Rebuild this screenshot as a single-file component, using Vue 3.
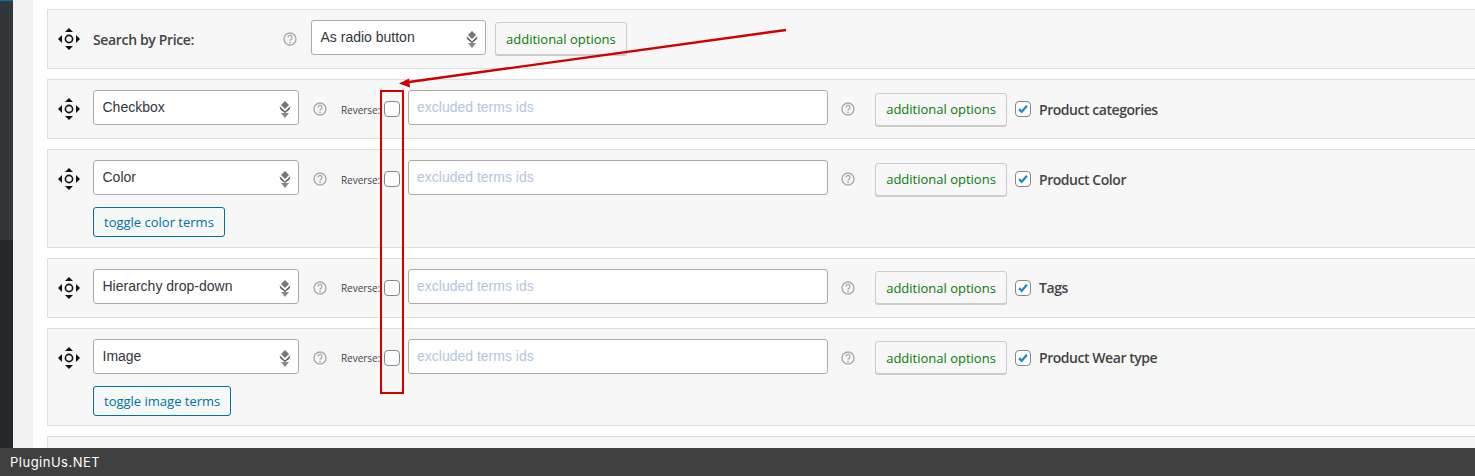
<script setup>
const rows = [
  { type: 'Checkbox', label: 'Product categories' },
  { type: 'Color', label: 'Product Color', toggle: 'toggle color terms' },
  { type: 'Hierarchy drop-down', label: 'Tags' },
  { type: 'Image', label: 'Product Wear type', toggle: 'toggle image terms' },
]
</script>

<template>
  <div class="page">
    <aside class="sidebar"><div class="side-top"></div><div class="side-low"></div></aside>
    <div class="gutter"></div>
    <main class="main">
      <section class="row">
        <div class="line">
          <svg class="move shift" viewBox="0 0 22 22"><path d="M11 0l4 4H7zM11 22l-4-4h8zM0 11l4-4v8zM22 11l-4 4V7z" fill="#111"/><circle cx="11" cy="11" r="3.6" fill="none" stroke="#111" stroke-width="1.6"/></svg>
          <strong class="title shift">Search by Price:</strong>
          <svg class="help help-first shift" viewBox="0 0 14 14"><circle cx="7" cy="7" r="6" fill="none" stroke="#aaa" stroke-width="1.4"/><path d="M5 5.4a2 2 0 1 1 3.1 1.7c-.8.5-1.1.8-1.1 1.6" fill="none" stroke="#aaa" stroke-width="1.3"/><circle cx="7" cy="10.4" r=".9" fill="#aaa"/></svg>
          <div class="select select-price">As radio button
            <svg class="arrows" viewBox="0 0 12 17"><path d="M6 0l4 4-4 4-4-4z" fill="#777"/><path d="M0.5 5l5.5 5.5L11.500 5l-1 3.500-4.500 3.500-4.500-3.500z" fill="#555"/><path d="M2 12h8l-4 5z" fill="#7f8a94"/></svg>
          </div>
          <button class="options options-price">additional options</button>
        </div>
      </section>

      <section v-for="r in rows" :key="r.type" class="row">
        <div class="line">
          <svg class="move shift" viewBox="0 0 22 22"><path d="M11 0l4 4H7zM11 22l-4-4h8zM0 11l4-4v8zM22 11l-4 4V7z" fill="#111"/><circle cx="11" cy="11" r="3.6" fill="none" stroke="#111" stroke-width="1.6"/></svg>
          <div class="select select-term">{{ r.type }}
            <svg class="arrows" viewBox="0 0 12 17"><path d="M6 0l4 4-4 4-4-4z" fill="#777"/><path d="M0.5 5l5.5 5.5L11.500 5l-1 3.500-4.500 3.500-4.500-3.500z" fill="#555"/><path d="M2 12h8l-4 5z" fill="#7f8a94"/></svg>
          </div>
          <svg class="help help-a shift" viewBox="0 0 14 14"><circle cx="7" cy="7" r="6" fill="none" stroke="#aaa" stroke-width="1.4"/><path d="M5 5.4a2 2 0 1 1 3.1 1.7c-.8.5-1.1.8-1.1 1.6" fill="none" stroke="#aaa" stroke-width="1.3"/><circle cx="7" cy="10.4" r=".9" fill="#aaa"/></svg>
          <span class="reverse shift">Reverse:</span>
          <span class="box shift"></span>
          <div class="excluded">excluded terms ids</div>
          <svg class="help help-b shift" viewBox="0 0 14 14"><circle cx="7" cy="7" r="6" fill="none" stroke="#aaa" stroke-width="1.4"/><path d="M5 5.4a2 2 0 1 1 3.1 1.7c-.8.5-1.1.8-1.1 1.6" fill="none" stroke="#aaa" stroke-width="1.3"/><circle cx="7" cy="10.4" r=".9" fill="#aaa"/></svg>
          <button class="options options-term shift">additional options</button>
          <span class="box checked shift"><svg viewBox="0 0 16 16"><path d="M3.500 8.200l3 3 6-7" fill="none" stroke="#1e8cbe" stroke-width="2.600"/></svg></span>
          <strong class="label shift">{{ r.label }}</strong>
        </div>
        <button v-if="r.toggle" class="toggle">{{ r.toggle }}</button>
      </section>

      <section class="row row-cut"></section>
    </main>

    <div class="marker"></div>
    <svg class="arrow" width="400" height="70" viewBox="0 0 400 70">
      <path d="M388 2L11 54" stroke="#cf0000" stroke-width="2.400" fill="none"/>
      <path d="M1 55.500L11 50.500L12 59.500z" fill="#cf0000"/>
    </svg>
    <footer class="footer">PluginUs.NET</footer>
  </div>
</template>

<style>
html, body { margin: 0; background: #fff; overflow: hidden; }
</style>

<style scoped>
.page { position: relative; display: flex; width: 1475px; height: 476px; overflow: hidden; background: #fff; font-family: "Open Sans", sans-serif; color: #444; }
.sidebar { width: 13px; flex: none; display: flex; flex-direction: column; background: #32373c; }
.side-top { height: 240px; background: #32373c; border-top: 1px solid #0073aa; box-sizing: border-box; }
.side-low { flex: 1; background: #23282d; }
.gutter { width: 20px; flex: none; background: #f1f1f1; }
.main { flex: 1; min-width: 0; padding: 9px 0 0 14px; display: flex; flex-direction: column; gap: 10px; }
.row { box-sizing: border-box; width: 1440px; min-height: 60px; padding: 10px 0 10px 10px; background: #f7f7f7; border: 1px solid #dedede; }
.row-cut { min-height: 40px; }
.line { display: flex; align-items: center; height: 35px; }
.shift { margin-top: 3px; }
.move { width: 22px; height: 22px; flex: none; }
.title { margin-left: 13px; width: 190px; flex: none; font-size: 14px; letter-spacing: -.35px; font-weight: 600; color: #444; white-space: nowrap; }
.help { width: 14px; height: 14px; flex: none; }
.help-first { margin-right: 14px; }
.help-a { margin-left: 14px; margin-right: 14px; }
.help-b { margin-left: 13px; margin-right: 20px; }
.select { position: relative; box-sizing: border-box; height: 35px; padding: 0 8.500px 1px; display: flex; align-items: center; flex: none; background: #fff; border: 1px solid #ababab; border-radius: 3px; font-family: "Liberation Sans", sans-serif; font-size: 14px; color: #32373c; }
.select-price { width: 175px; }
.select-term { width: 206px; margin-left: 13px; }
.arrows { position: absolute; right: 7.500px; top: 10px; width: 12px; height: 17px; }
.options { box-sizing: border-box; height: 33px; padding: 0 10px; flex: none; background: #f7f7f7; border: 1px solid #ccc; border-radius: 3px; box-shadow: 0 1px 0 #ccc; font-family: "Open Sans", sans-serif; font-size: 13px; color: #0a7a0a; white-space: nowrap; }
.options-price { margin-left: 9px; margin-top: 2px; }
.options-term { width: 132px; }
.reverse { width: 43px; flex: none; font-size: 10px; letter-spacing: -.05px; line-height: 16px; padding-top: 1px; white-space: nowrap; color: #444; }
.box { box-sizing: border-box; display: block; width: 16px; height: 16px; flex: none; background: #fff; border: 1px solid #7e8993; border-radius: 4px; }
.box svg { display: block; width: 100%; height: 100%; }
.excluded { box-sizing: border-box; width: 420px; height: 35px; margin-left: 8px; padding: 0 8px 1px; display: flex; align-items: center; flex: none; background: #fff; border: 1px solid #ababab; border-radius: 3px; font-family: "Liberation Sans", sans-serif; font-size: 14px; color: #b4c6dd; }
.checked { margin-left: 8px; }
.label { margin-left: 8px; font-size: 14px; letter-spacing: -.45px; font-weight: 600; color: #444; white-space: nowrap; }
.toggle { display: block; box-sizing: border-box; height: 30px; margin: 12px 0 0 35px; padding: 0 10px; background: #f6f7f7; border: 1px solid #0071a1; border-radius: 3px; font-family: "Open Sans", sans-serif; font-size: 13px; color: #0071a1; }
.marker { position: absolute; left: 380px; top: 90px; width: 24px; height: 304px; box-sizing: border-box; border: 2px solid #cf0000; }
.arrow { position: absolute; left: 398px; top: 28px; }
.footer { position: absolute; left: 0; right: 0; bottom: 0; height: 28px; padding-left: 10px; display: flex; align-items: center; background: #404040; color: #fff; font-family: Inter, sans-serif; font-size: 13px; letter-spacing: .5px; }
</style>
